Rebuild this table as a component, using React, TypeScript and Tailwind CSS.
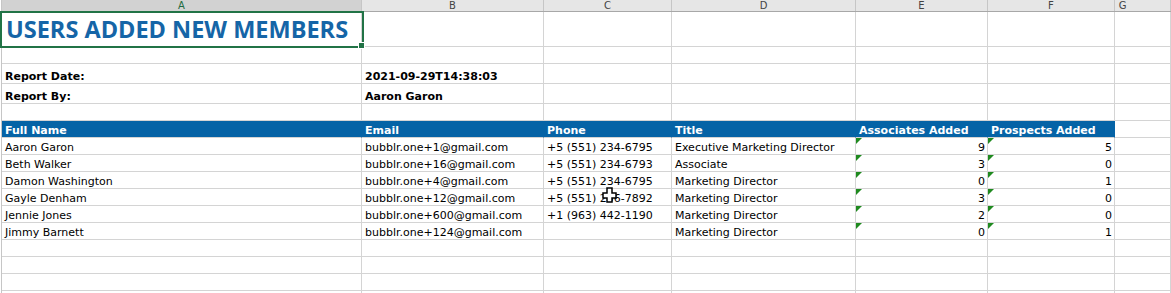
import React from "react";

const COLS = ["w-[360px]", "w-[182px]", "w-[128px]", "w-[184px]", "w-[132px]", "w-[127px]", "flex-1"];

type CellDef = { text?: string; bold?: boolean; right?: boolean; tri?: boolean };

function Tri() {
  return (
    <svg className="absolute left-0 top-0" width="6" height="6" viewBox="0 0 6 6">
      <polygon points="0,0 6,0 0,6" fill="#1f8a1f" />
    </svg>
  );
}

function Row({ h, cells, blue }: { h: string; cells: CellDef[]; blue?: boolean }) {
  return (
    <div className={`flex ${h}`}>
      {COLS.map((w, i) => {
        const c = cells[i] || {};
        const isBlue = blue && i < 6;
        return (
          <div
            key={i}
            className={`${w} relative flex items-end shrink-0 border-b border-r border-[#d4d4d4] pl-[3px] pr-[2px] pb-[1px] whitespace-nowrap ${
              isBlue ? "bg-[#0563a6] border-r-[#0563a6] text-white" : "text-black"
            } ${c.right ? "justify-end" : ""} ${c.bold ? "font-bold" : ""}`}
          >
            {c.tri && <Tri />}
            {c.text}
          </div>
        );
      })}
    </div>
  );
}

const data = [
  ["Aaron Garon", "bubblr.one+1@gmail.com", "+5 (551) 234-6795", "Executive Marketing Director", "9", "5"],
  ["Beth Walker", "bubblr.one+16@gmail.com", "+5 (551) 234-6793", "Associate", "3", "0"],
  ["Damon Washington", "bubblr.one+4@gmail.com", "+5 (551) 234-6795", "Marketing Director", "0", "1"],
  ["Gayle Denham", "bubblr.one+12@gmail.com", "+5 (551) 236-7892", "Marketing Director", "3", "0"],
  ["Jennie Jones", "bubblr.one+600@gmail.com", "+1 (963) 442-1190", "Marketing Director", "2", "0"],
  ["Jimmy Barnett", "bubblr.one+124@gmail.com", "", "Marketing Director", "0", "1"],
];

export default function App() {
  const letters = ["A", "B", "C", "D", "E", "F", "G"];
  return (
    <div
      className="relative w-[1171px] h-[293px] overflow-hidden bg-white text-[11px] leading-none"
      style={{ fontFamily: '"DejaVu Sans", Verdana, sans-serif' }}
    >
      <div className="ml-[1px] border-l border-[#c6c6c6]">
        {/* column headers */}
        <div className="flex h-[12px] overflow-hidden border-b border-[#a8a8a8]">
          {COLS.map((w, i) => (
            <div
              key={i}
              className={`${w} shrink-0 flex justify-center items-center border-r border-[#c6c6c6] ${
                i === 0 ? "bg-[#d2d2d2] text-[#1e6b40]" : "bg-[#e6e6e6] text-[#444444]"
              } text-[10px] leading-[10px] ${i === 6 ? "pr-[40px]" : ""}`}
            >
              {letters[i]}
            </div>
          ))}
        </div>
        {/* row 1 title */}
        <div className="flex h-[35px]">
          {COLS.map((w, i) => (
            <div
              key={i}
              className={`${w} shrink-0 border-b border-r border-[#d4d4d4] flex items-end pl-[4px] pb-[5px]`}
            >
              {i === 0 && (
                <span
                  className="text-[#1565a7] font-bold text-[23.5px] leading-none whitespace-nowrap"
                  style={{ fontFamily: '"Open Sans", sans-serif' }}
                >
                  USERS ADDED NEW MEMBERS
                </span>
              )}
            </div>
          ))}
        </div>
        <Row h="h-[17px]" cells={[]} />
        <Row h="h-[20px]" cells={[{ text: "Report Date:", bold: true }, { text: "2021-09-29T14:38:03", bold: true }]} />
        <Row h="h-[20px]" cells={[{ text: "Report By:", bold: true }, { text: "Aaron Garon", bold: true }]} />
        <Row h="h-[17px]" cells={[]} />
        <Row
          h="h-[17px]"
          blue
          cells={["Full Name", "Email", "Phone", "Title", "Associates Added", "Prospects Added"].map((t) => ({
            text: t,
            bold: true,
          }))}
        />
        {data.map((r, idx) => (
          <Row
            key={idx}
            h="h-[17px]"
            cells={[
              { text: r[0] },
              { text: r[1] },
              { text: r[2] },
              { text: r[3] },
              { text: r[4], right: true, tri: true },
              { text: r[5], right: true, tri: true },
            ]}
          />
        ))}
        <Row h="h-[17px]" cells={[]} />
        <Row h="h-[17px]" cells={[]} />
        <Row h="h-[17px]" cells={[]} />
        <Row h="h-[17px]" cells={[]} />
      </div>

      {/* selection */}
      <div className="absolute left-0 top-[11px] w-[364px] h-[37px] border-2 border-[#217346]" />
      <div className="absolute left-[358px] top-[42px] w-[7px] h-[7px] bg-[#217346] border border-white" />

      {/* cursor */}
      <svg className="absolute left-[602px] top-[187px]" width="15" height="16" viewBox="0 0 15 16">
        <path
          d="M5 1 H10 V6 H14 V11 H10 V15 H5 V11 H1 V6 H5 Z"
          fill="white"
          stroke="black"
          strokeWidth="1.5"
          strokeLinejoin="miter"
        />
      </svg>
    </div>
  );
}
